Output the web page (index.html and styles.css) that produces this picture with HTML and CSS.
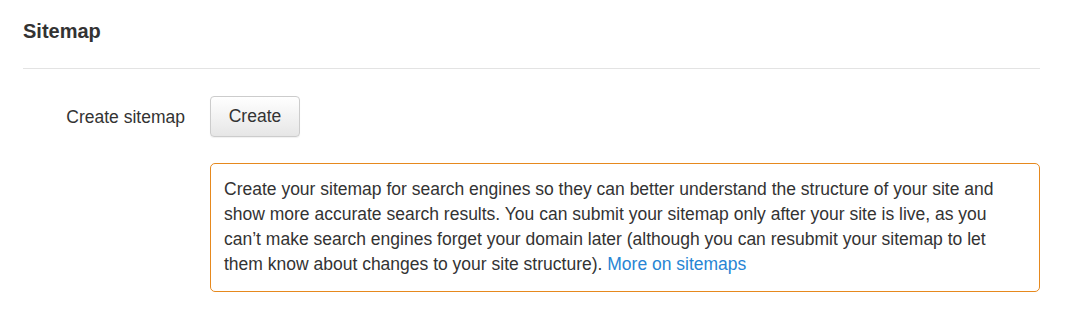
FILE: index.html
```html
<!DOCTYPE html>
<html>
<head>
<meta charset="utf-8">
<link rel="stylesheet" href="styles.css">
</head>
<body>
<div class="panel">
  <h2 class="title">Sitemap</h2>
  <div class="divider"></div>
  <div class="form-row">
    <div class="label">Create sitemap</div>
    <div class="field">
      <button class="btn">Create</button>
    </div>
  </div>
  <div class="form-row info-row">
    <div class="label"></div>
    <div class="info">Create your sitemap for search engines so they can better understand the structure of your site and show more accurate search results. You can submit your sitemap only after your site is live, as you can’t make search engines forget your domain later (although you can resubmit your sitemap to let them know about changes to your site structure). <a href="#" class="link">More on sitemaps</a></div>
  </div>
</div>
</body>
</html>
```

FILE: styles.css
```css
html, body {
  margin: 0;
  padding: 0;
  background: #ffffff;
}
body {
  font-family: "Liberation Sans", Arial, sans-serif;
  color: #333333;
  font-size: 17.5px;
}
.panel {
  padding: 19px 25px 0 23px;
}
.title {
  margin: 0;
  font-size: 20px;
  font-weight: bold;
  line-height: 24px;
  color: #333333;
}
.divider {
  height: 1px;
  background: #e3e3e3;
  margin-top: 25px;
}
.form-row {
  display: grid;
  grid-template-columns: 187px 1fr;
  align-items: center;
  margin-top: 27px;
}
.label {
  text-align: right;
  padding-right: 25px;
  line-height: 24px;
}
.btn {
  font-family: "Liberation Sans", Arial, sans-serif;
  font-size: 17.5px;
  color: #333333;
  width: 90px;
  height: 41px;
  border: 1px solid #cccccc;
  border-radius: 4px;
  background: linear-gradient(#ffffff, #e6e6e6);
  box-shadow: 0 1px 1px rgba(0,0,0,0.06);
  padding: 0;
}
.info-row {
  margin-top: 26px;
  align-items: start;
}
.info {
  border: 1px solid #e6891e;
  border-radius: 5px;
  padding: 13px 13px 14px 13px;
  line-height: 25px;
}
.link {
  color: #2785d4;
  text-decoration: none;
}
```
